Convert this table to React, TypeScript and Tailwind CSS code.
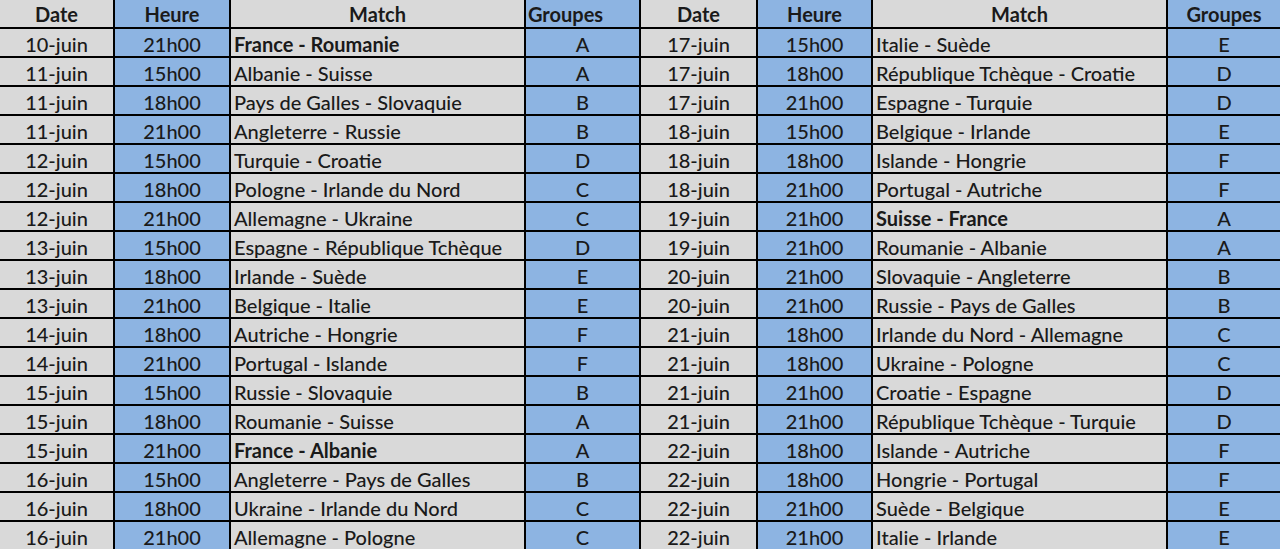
const left: [string, string, string, string, boolean?][] = [
  ["10-juin", "21h00", "France - Roumanie", "A", true],
  ["11-juin", "15h00", "Albanie - Suisse", "A"],
  ["11-juin", "18h00", "Pays de Galles - Slovaquie", "B"],
  ["11-juin", "21h00", "Angleterre - Russie", "B"],
  ["12-juin", "15h00", "Turquie - Croatie", "D"],
  ["12-juin", "18h00", "Pologne - Irlande du Nord", "C"],
  ["12-juin", "21h00", "Allemagne - Ukraine", "C"],
  ["13-juin", "15h00", "Espagne - République Tchèque", "D"],
  ["13-juin", "18h00", "Irlande - Suède", "E"],
  ["13-juin", "21h00", "Belgique - Italie", "E"],
  ["14-juin", "18h00", "Autriche - Hongrie", "F"],
  ["14-juin", "21h00", "Portugal - Islande", "F"],
  ["15-juin", "15h00", "Russie - Slovaquie", "B"],
  ["15-juin", "18h00", "Roumanie - Suisse", "A"],
  ["15-juin", "21h00", "France - Albanie", "A", true],
  ["16-juin", "15h00", "Angleterre - Pays de Galles", "B"],
  ["16-juin", "18h00", "Ukraine - Irlande du Nord", "C"],
  ["16-juin", "21h00", "Allemagne - Pologne", "C"],
];

const right: [string, string, string, string, boolean?][] = [
  ["17-juin", "15h00", "Italie - Suède", "E"],
  ["17-juin", "18h00", "République Tchèque - Croatie", "D"],
  ["17-juin", "21h00", "Espagne - Turquie", "D"],
  ["18-juin", "15h00", "Belgique - Irlande", "E"],
  ["18-juin", "18h00", "Islande - Hongrie", "F"],
  ["18-juin", "21h00", "Portugal - Autriche", "F"],
  ["19-juin", "21h00", "Suisse - France", "A", true],
  ["19-juin", "21h00", "Roumanie - Albanie", "A"],
  ["20-juin", "21h00", "Slovaquie - Angleterre", "B"],
  ["20-juin", "21h00", "Russie - Pays de Galles", "B"],
  ["21-juin", "18h00", "Irlande du Nord - Allemagne", "C"],
  ["21-juin", "18h00", "Ukraine - Pologne", "C"],
  ["21-juin", "21h00", "Croatie - Espagne", "D"],
  ["21-juin", "21h00", "République Tchèque - Turquie", "D"],
  ["22-juin", "18h00", "Islande - Autriche", "F"],
  ["22-juin", "18h00", "Hongrie - Portugal", "F"],
  ["22-juin", "21h00", "Suède - Belgique", "E"],
  ["22-juin", "21h00", "Italie - Irlande", "E"],
];

const grey = "bg-[#d9d9d9]";
const blue = "bg-[#8db4e2]";
const headers = ["Date", "Heure", "Match", "Groupes", "Date", "Heure", "Match", "Groupes"];

export default function App() {
  return (
    <div
      className="grid h-[549px] w-[1280px] grid-cols-[113px_114px_293px_113px_115px_113px_293px_112px] grid-rows-[repeat(19,27px)] gap-[2px] overflow-hidden bg-black text-[20px] font-medium leading-none text-[#1a1a1a]"
      style={{ fontFamily: "Lato, 'Open Sans', sans-serif" }}
    >
      {headers.map((h, i) => (
        <div
          key={"h" + i}
          className={`flex items-center font-bold ${i === 3 ? "justify-start pl-[2px]" : "justify-center"} ${i % 2 === 1 ? blue : grey}`}
        >
          {h}
        </div>
      ))}
      {left.map((row, r) => {
        const rr = right[r];
        return [row, rr].map((m, side) => (
          <Row key={`${r}-${side}`} m={m} />
        ));
      })}
    </div>
  );
}

function Row({ m }: { m: [string, string, string, string, boolean?] }) {
  return (
    <>
      <div className={`flex items-center justify-center pt-[2px] ${grey}`}>{m[0]}</div>
      <div className={`flex items-center justify-center pt-[2px] ${blue}`}>{m[1]}</div>
      <div className={`flex items-center pl-[3px] pt-[2px] ${grey} ${m[4] ? "font-bold" : ""}`}>{m[2]}</div>
      <div className={`flex items-center justify-center pt-[2px] ${blue}`}>{m[3]}</div>
    </>
  );
}
